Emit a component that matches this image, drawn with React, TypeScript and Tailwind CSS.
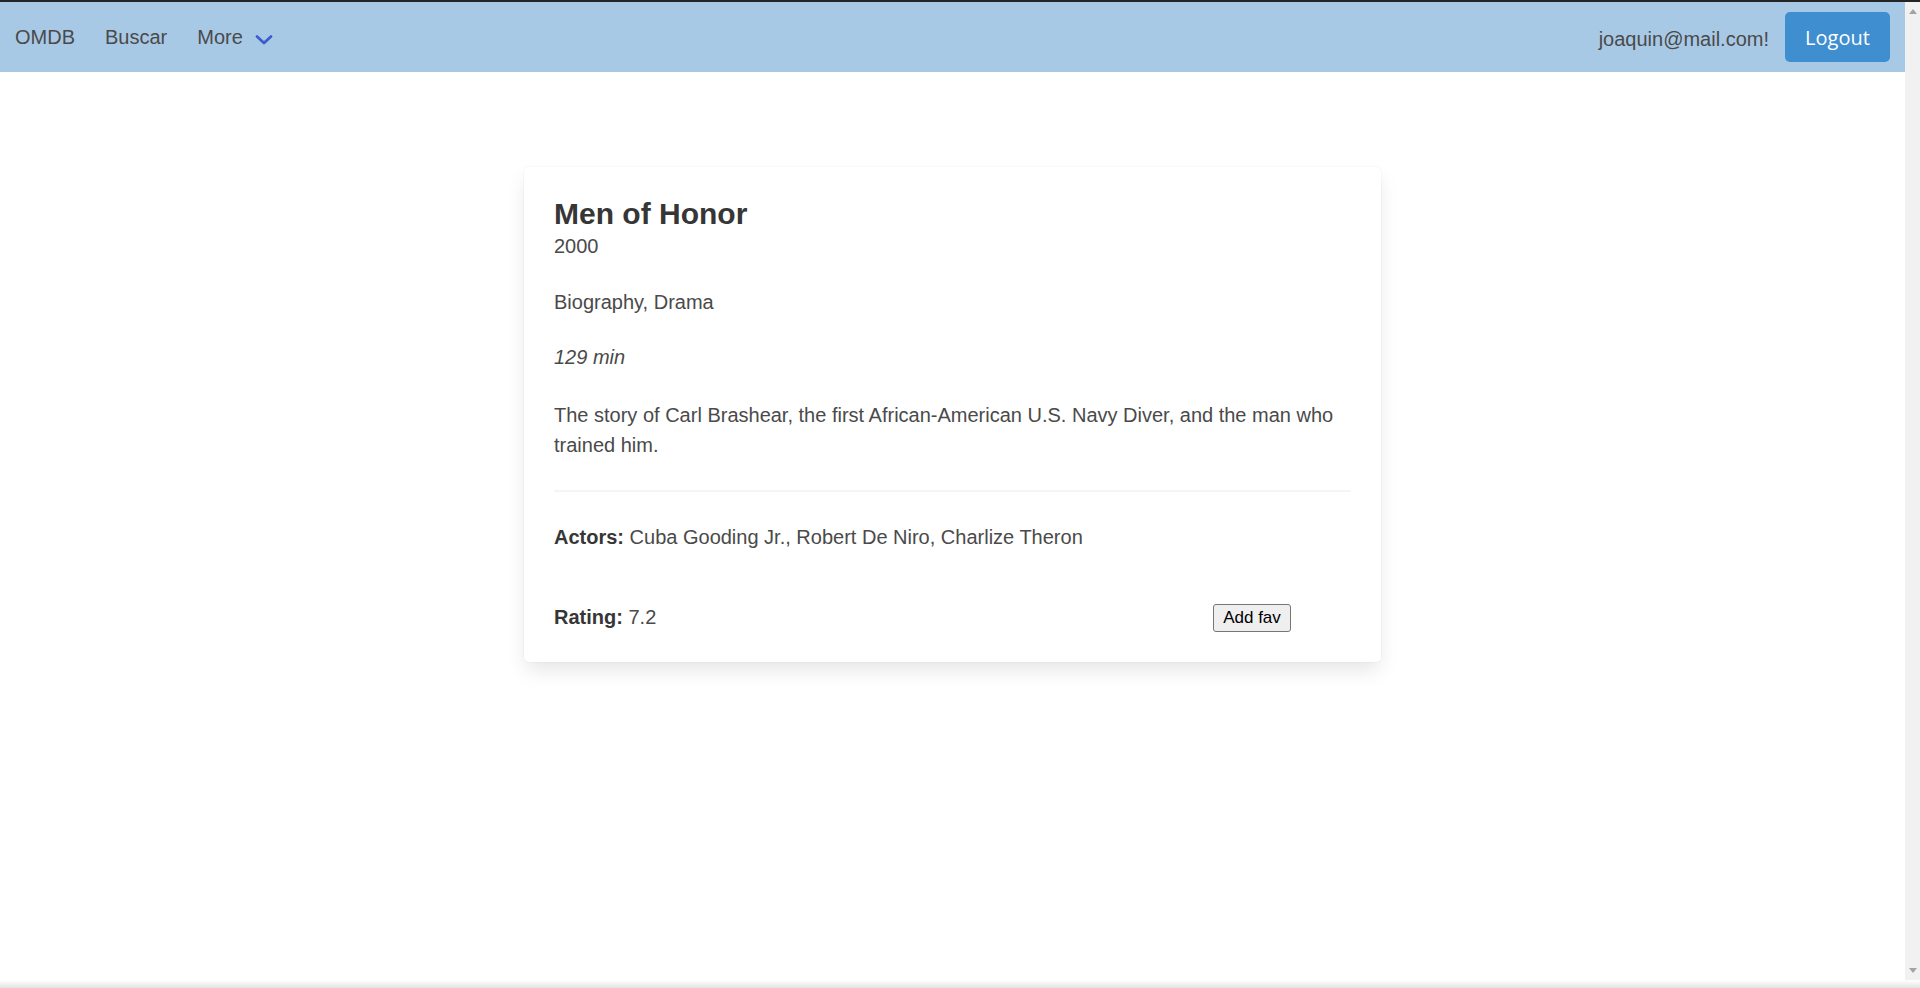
import React from 'react';

const movie = {
  title: 'Men of Honor',
  year: '2000',
  genre: 'Biography, Drama',
  runtime: '129 min',
  plot: 'The story of Carl Brashear, the first African-American U.S. Navy Diver, and the man who trained him.',
  actors: 'Cuba Gooding Jr., Robert De Niro, Charlize Theron',
  rating: '7.2',
};

const Navbar = () => {
  return (
    <nav className="flex h-[70px] items-stretch justify-between bg-[#a8c9e6] text-[20px] text-[#4a4a4a]">
      <div className="flex items-center">
        <a className="px-[15px]">OMDB</a>
        <a className="px-[15px]">Buscar</a>
        <div className="flex items-center pl-[15px]">
          <span>More</span>
          <svg width="18" height="11" viewBox="0 0 18 11" className="ml-[12px] mt-[4px]">
            <path d="M2 2.5 L9 9 L16 2.5" fill="none" stroke="#3f5ccf" strokeWidth="2.8" strokeLinecap="round" strokeLinejoin="round" />
          </svg>
        </div>
      </div>
      <div className="flex items-center pr-[15px]">
        <span className="mr-[16px] mt-[3px]">joaquin@mail.com!</span>
        <button
          type="button"
          className="h-[50px] w-[105px] rounded-[5px] bg-[#3e8ed0] pt-[2px] text-[20px] text-white"
          style={{ fontFamily: '"Open Sans", "Liberation Sans", sans-serif' }}
        >
          Logout
        </button>
      </div>
    </nav>
  );
};

const MovieCard = () => {
  return (
    <div className="mx-auto mt-[95px] w-[857px] rounded-[5px] bg-white p-[30px] text-[20px] leading-[30px] text-[#4a4a4a] shadow-[0_10px_20px_-2.5px_rgba(10,10,10,0.1),0_0_0_1px_rgba(10,10,10,0.02)]">
      <h1 className="text-[30px] font-bold leading-[34px] text-[#363636]">{movie.title}</h1>
      <p>{movie.year}</p>
      <p className="mt-[26px]">{movie.genre}</p>
      <p className="mt-[25px] italic">{movie.runtime}</p>
      <p className="mt-[28px]">{movie.plot}</p>
      <hr className="mt-[30px] h-[2px] border-0 bg-[#f5f5f5]" />
      <p className="mt-[30px]">
        <strong className="font-bold text-[#363636]">Actors:</strong> {movie.actors}
      </p>
      <div className="mt-[50px] flex items-center">
        <p className="w-[659px]">
          <strong className="font-bold text-[#363636]">Rating:</strong> {movie.rating}
        </p>
        <button
          type="button"
          className="mt-[2px] h-[28px] w-[78px] rounded-[3px] border border-[#767676] bg-[#efefef] text-[17px] leading-[20px] text-black"
        >
          Add fav
        </button>
      </div>
    </div>
  );
};

const Scrollbar = () => {
  return (
    <div className="flex w-[15px] flex-col items-center justify-between bg-[#f1f1f1] py-[7px]">
      <svg width="8" height="5" viewBox="0 0 8 5">
        <path d="M0 5 L4 0 L8 5 Z" fill="#a3a3a3" />
      </svg>
      <svg width="8" height="5" viewBox="0 0 8 5">
        <path d="M0 0 L8 0 L4 5 Z" fill="#a3a3a3" />
      </svg>
    </div>
  );
};

export default function App() {
  return (
    <div
      className="flex h-[988px] w-[1920px] flex-col overflow-hidden bg-white"
      style={{ fontFamily: '"Liberation Sans", Arial, sans-serif' }}
    >
      <div className="h-[2px] bg-[#242424]" />
      <div className="flex flex-1">
        <main className="flex-1">
          <Navbar />
          <MovieCard />
        </main>
        <Scrollbar />
      </div>
      <div className="h-[8px] bg-gradient-to-b from-white to-[#e4e4e4]" />
    </div>
  );
}
